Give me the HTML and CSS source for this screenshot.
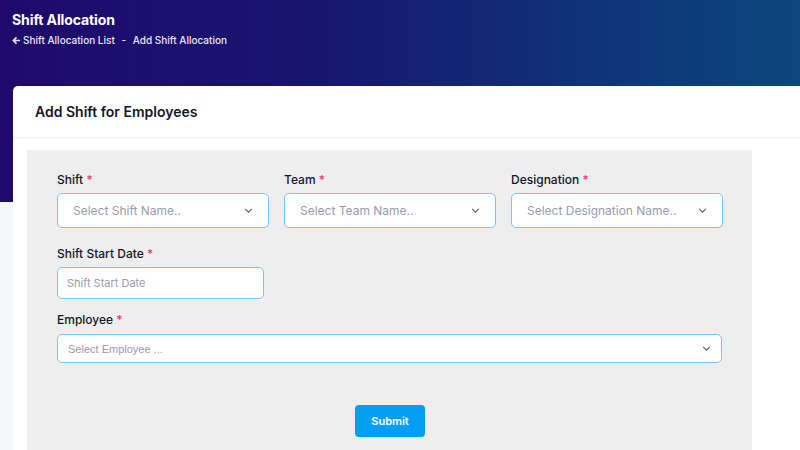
FILE: index.html
```html
<!DOCTYPE html>
<html lang="en">
<head>
    <meta charset="UTF-8">
    <meta name="viewport" content="width=device-width, initial-scale=1.0">
    <title>Shift Allocation</title>
    <link rel="stylesheet" href="styles.css">
</head>
<body>
    <div class="page-header">
        <h1 class="page-title">Shift Allocation</h1>
        <div class="crumbs">
            <a href="#"><svg class="back" viewBox="0 0 10 10"><path d="M9 5H2M5 1.5L1.5 5 5 8.5"/></svg>Shift Allocation List</a>
            <span class="sep">-</span>
            <span>Add Shift Allocation</span>
        </div>
    </div>

    <div class="card">
        <div class="card-head">Add Shift for Employees</div>
        <div class="card-body">
            <form class="form-box">
                <div class="row three">
                    <div class="field">
                        <label>Shift <span class="req">*</span></label>
                        <div class="select">
                            <span>Select Shift Name..</span>
                            <svg viewBox="0 0 10 6"><path d="M1 1l4 4 4-4"/></svg>
                        </div>
                    </div>
                    <div class="field">
                        <label>Team <span class="req">*</span></label>
                        <div class="select">
                            <span>Select Team Name..</span>
                            <svg viewBox="0 0 10 6"><path d="M1 1l4 4 4-4"/></svg>
                        </div>
                    </div>
                    <div class="field">
                        <label>Designation <span class="req">*</span></label>
                        <div class="select">
                            <span>Select Designation Name..</span>
                            <svg viewBox="0 0 10 6"><path d="M1 1l4 4 4-4"/></svg>
                        </div>
                    </div>
                </div>

                <div class="field date-field">
                    <label>Shift Start Date <span class="req">*</span></label>
                    <input class="input" type="text" placeholder="Shift Start Date">
                </div>

                <div class="field emp-field">
                    <label>Employee <span class="req">*</span></label>
                    <div class="select small">
                        <span>Select Employee ...</span>
                        <svg viewBox="0 0 10 6"><path d="M1 1l4 4 4-4"/></svg>
                    </div>
                </div>

                <div class="actions">
                    <button type="button" class="btn">Submit</button>
                </div>
            </form>
        </div>
    </div>
</body>
</html>
```

FILE: styles.css
```css
body {
    margin: 0;
    background-color: #f4f6fa;
    font-family: Inter, "Open Sans", sans-serif;
    color: #1b1b2f;
    overflow: hidden;
}

.page-header {
    height: 202px;
    box-sizing: border-box;
    padding: 11px 12px 0;
    background: linear-gradient(90deg, #1f0a6c 0%, #17166f 40%, #0f3479 75%, #0b477c 100%);
    color: #fff;
}

.page-title {
    margin: 0;
    font-size: 14px;
    font-weight: 700;
    letter-spacing: -0.1px;
}

.crumbs {
    margin-top: 6px;
    font-size: 10px;
    font-weight: 500;
    color: #e8e6f5;
}

.crumbs a {
    color: #e8e6f5;
    text-decoration: none;
}

.crumbs .back {
    width: 9px;
    height: 9px;
    margin-right: 2px;
    vertical-align: -1px;
    fill: none;
    stroke: #e8e6f5;
    stroke-width: 1.8;
}

.crumbs .sep {
    margin: 0 4px;
}

.card {
    margin: -116px 0 0 13px;
    background-color: #fff;
    border-radius: 5px 0 0 0;
    min-height: 380px;
}

.card-head {
    height: 52px;
    box-sizing: border-box;
    padding: 17px 22px 0;
    border-bottom: 1px solid #f2f2f4;
    font-size: 14px;
    font-weight: 600;
    color: #161629;
}

.card-body {
    padding: 12px 35px 0 14px;
    width: 725px;
}

.form-box {
    background-color: #eeeeee;
    padding: 21px 30px 40px;
    margin: 0;
}

.row.three {
    display: grid;
    grid-template-columns: 212px 212px 212px;
    column-gap: 15px;
}

.field label {
    display: block;
    font-size: 12px;
    font-weight: 500;
    line-height: 18px;
    margin-bottom: 4px;
    color: #15152a;
}

.req {
    color: #f0386b;
}

.select {
    display: flex;
    align-items: center;
    justify-content: space-between;
    height: 35px;
    box-sizing: border-box;
    padding: 0 15px;
    background-color: #fff;
    border: 1.5px solid #7cc4f5;
    border-radius: 5px;
    font-size: 12px;
    color: #9a9ab0;
}

.select svg {
    width: 9px;
    height: 5px;
    fill: none;
    stroke: #5a5b6e;
    stroke-width: 1.3;
}

.date-field {
    margin-top: 17px;
}

.input {
    display: block;
    width: 207px;
    height: 32px;
    box-sizing: border-box;
    padding: 0 9px;
    border: 1.5px solid #7cc4f5;
    border-radius: 5px;
    font-family: inherit;
    font-size: 11px;
    outline: none;
}

.input::placeholder {
    color: #9a9ab0;
}

.emp-field {
    margin-top: 12px;
}

.emp-field label {
    margin-bottom: 5px;
}

.select.small {
    height: 29px;
    padding: 0 10px 0 10px;
    font-family: "Liberation Sans", Arial, sans-serif;
    font-size: 11px;
}

.actions {
    margin-top: 26px;
    padding-top: 15px;
    border-top: 1px solid #f1f1f1;
    margin-left: -30px;
    margin-right: -7px;
    padding-left: 328px;
}

.btn {
    width: 70px;
    height: 32px;
    border: none;
    border-radius: 4px;
    background-color: #049ff5;
    color: #fff;
    font-family: inherit;
    font-size: 11px;
    font-weight: 600;
    cursor: pointer;
}

.btn:hover {
    background-color: #0a8fdb;
}
```
